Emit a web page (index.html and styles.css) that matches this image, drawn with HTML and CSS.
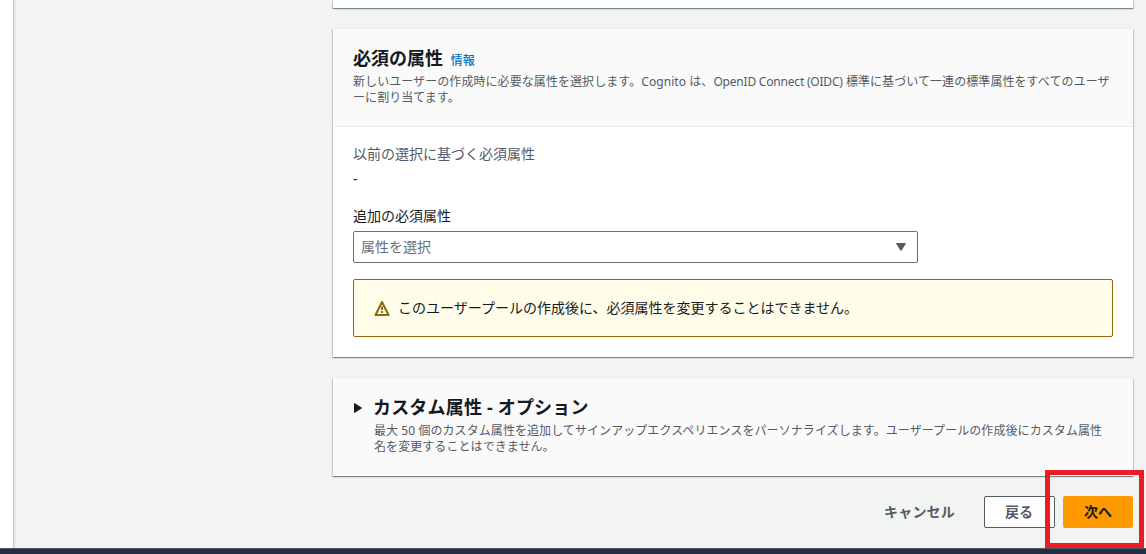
FILE: index.html
```html
<!DOCTYPE html>
<html lang="ja">
<head>
<meta charset="utf-8">
<title>ユーザープールを作成</title>
<link rel="stylesheet" href="styles.css">
</head>
<body>
<div class="app">
  <div class="layout">
    <aside class="side-nav"></aside>
    <main class="content">
      <section class="card card-previous"></section>
      <section class="card">
        <header class="card-header">
          <h2 class="card-title">必須の属性 <a class="info-link">情報</a></h2>
          <p class="card-description">新しいユーザーの作成時に必要な属性を選択します。Cognito は、<span class="latin">OpenID Connect (OIDC)</span> 標準に基づいて一連の標準属性をすべてのユーザ<br>ーに割り当てます。</p>
        </header>
        <div class="card-body">
          <div class="label label-muted">以前の選択に基づく必須属性</div>
          <div class="value">-</div>
          <div class="label">追加の必須属性</div>
          <div class="select">
            <span>属性を選択</span>
            <svg class="caret" width="12" height="10" viewBox="0 0 12 10"><path d="M1.5 1.5h9L6 8.5z" fill="#545b64" stroke="#545b64" stroke-linejoin="round"/></svg>
          </div>
          <div class="alert">
            <svg width="16" height="16" viewBox="0 0 16 16" fill="none" stroke="#906806" stroke-width="2"><path d="M8 2L1.5 15h13z" stroke-linejoin="round"/><path d="M8 6.5v3.5M8 11v2"/></svg>
            <span>このユーザープールの作成後に、必須属性を変更することはできません。</span>
          </div>
        </div>
      </section>
      <section class="card card-expandable">
        <svg class="expand-icon" width="10" height="12" viewBox="0 0 10 12"><path d="M1.5 1.5v9L8.5 6z" fill="#16191f" stroke="#16191f" stroke-linejoin="round"/></svg>
        <div>
          <h2 class="card-title card-title-wide">カスタム属性 - オプション</h2>
          <p class="card-description">最大 50 個のカスタム属性を追加してサインアップエクスペリエンスをパーソナライズします。ユーザープールの作成後にカスタム属性<br>名を変更することはできません。</p>
        </div>
      </section>
      <div class="actions">
        <button class="button button-link">キャンセル</button>
        <button class="button button-normal">戻る</button>
        <button class="button button-primary">次へ</button>
      </div>
    </main>
  </div>
  <footer class="footer"></footer>
  <div class="highlight"></div>
</div>
</body>
</html>
```
FILE: styles.css
```css
* {
  box-sizing: border-box;
}

body {
  margin: 0;
  font-family: "Noto Sans", "Noto Sans CJK JP", sans-serif;
  font-size: 14px;
  line-height: 22px;
  color: #16191f;
  background: #f2f3f3;
}

.app {
  position: relative;
  display: flex;
  flex-direction: column;
  height: 554px;
  overflow: hidden;
}

.layout {
  display: flex;
  flex: 1;
}

.side-nav {
  width: 14px;
  background: #fff;
  border-right: 1px solid #c6cbcb;
  box-shadow: 1px 0 1px rgba(0, 28, 36, 0.08);
}

.content {
  display: flex;
  flex-direction: column;
  gap: 21px;
  width: 800px;
  margin-left: 319px;
}

.card {
  background: #fff;
  box-shadow: 0 -1px 0 #eaeded, 0 1px 1px 0 rgba(0, 28, 36, 0.3),
    1px 1px 1px 0 rgba(0, 28, 36, 0.15), -1px 1px 1px 0 rgba(0, 28, 36, 0.15);
}

.card-previous {
  height: 8px;
}

.card-header {
  height: 98px;
  padding: 18px 20px 0;
  background: #fafafa;
  border-bottom: 1px solid #eaeded;
}

.card-title {
  margin: 0;
  font-size: 18px;
  line-height: 22px;
  font-weight: 700;
  white-space: nowrap;
}

.card-title-wide {
  letter-spacing: 0.18px;
}

.info-link {
  margin-left: 3px;
  font-size: 12px;
  font-weight: 500;
  color: #0073bb;
}

.card-description {
  margin: 2px 0 0;
  font-size: 12px;
  line-height: 16px;
  letter-spacing: 0.07px;
  color: #545b64;
  white-space: nowrap;
}

.latin {
  letter-spacing: -0.2px;
}

.card-body {
  padding: 16px 20px 20px;
}

.label-muted {
  color: #545b64;
}

.value {
  margin: 3px 0 15px;
}

.select {
  display: flex;
  align-items: center;
  justify-content: space-between;
  width: 565px;
  height: 32px;
  margin-top: 4px;
  padding: 0 10px 0 7px;
  border: 1px solid #687078;
  border-radius: 2px;
  color: #687078;
}

.alert {
  display: flex;
  align-items: center;
  gap: 8px;
  height: 58px;
  margin-top: 16px;
  padding: 0 20px;
  border: 1px solid #906806;
  border-radius: 2px;
  background: #fffce9;
}

.card-expandable {
  display: flex;
  height: 98px;
  padding: 18px 20px 0;
  background: #fafafa;
}

.card-expandable .card-description {
  margin-top: 5px;
  padding-left: 1px;
}

.expand-icon {
  flex: none;
  margin: 6px 10px 0 0;
}

.actions {
  display: flex;
  justify-content: flex-end;
  gap: 8px;
  margin-top: -1px;
}

.button {
  height: 32px;
  padding: 0 20px;
  border: 1px solid transparent;
  border-radius: 2px;
  font: inherit;
  font-weight: 700;
  color: #545b64;
  background: transparent;
}

.button-link {
  letter-spacing: 0.2px;
}

.button-normal {
  width: 71px;
  padding: 0 20px 0 19px;
  background: #fff;
  border-color: #545b64;
}

.button-primary {
  width: 70px;
  color: #16191f;
  background: #ff9900;
}

.footer {
  height: 6px;
  background: #232f3e;
  border-top: 1px solid #545b64;
}

.highlight {
  position: absolute;
  left: 1045px;
  top: 470px;
  width: 99px;
  height: 78px;
  border: 5px solid #ed1c24;
}
```
